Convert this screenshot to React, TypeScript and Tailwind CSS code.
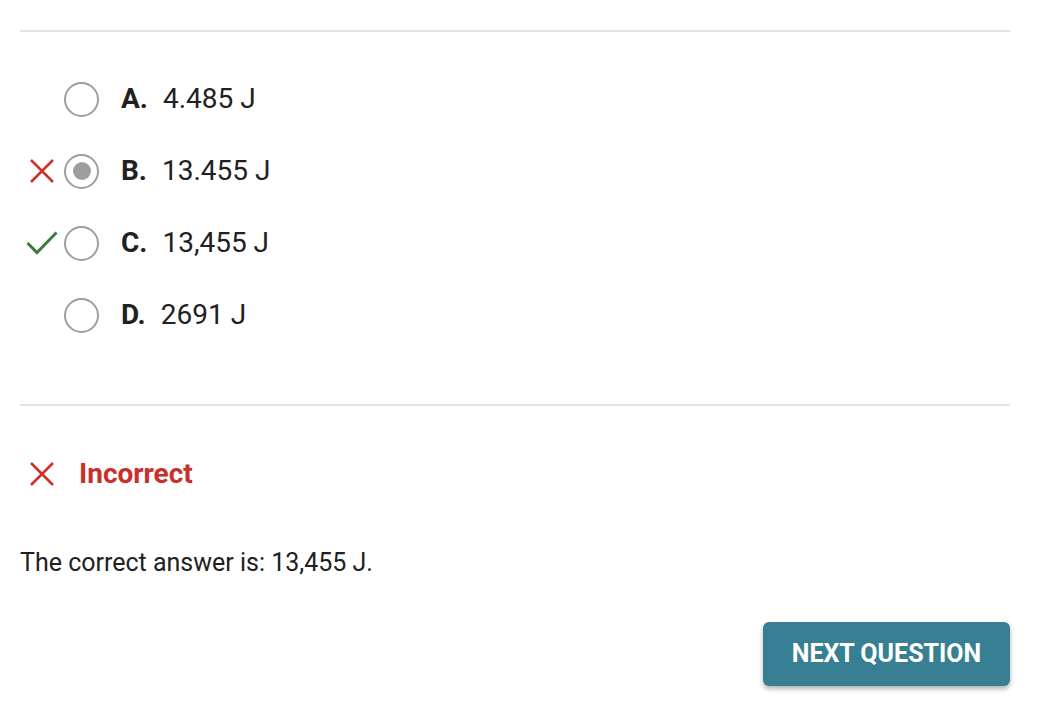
import React from 'react';

type Mark = 'wrong' | 'right' | null;

interface Option {
  letter: string;
  value: string;
  selected: boolean;
  mark: Mark;
}

const options: Option[] = [
  { letter: 'A.', value: '4.485 J', selected: false, mark: null },
  { letter: 'B.', value: '13.455 J', selected: true, mark: 'wrong' },
  { letter: 'C.', value: '13,455 J', selected: false, mark: 'right' },
  { letter: 'D.', value: '2691 J', selected: false, mark: null },
];

const CrossIcon = () => (
  <svg width="26" height="26" viewBox="0 0 26 26" fill="none">
    <path d="M2 2 L24 24 M24 2 L2 24" stroke="#d0312d" strokeWidth="2.6" />
  </svg>
);

const CheckIcon = () => (
  <svg width="32" height="24" viewBox="0 0 32 24" fill="none">
    <path d="M1.5 12 L11 21.5 L30.5 1.5" stroke="#3a7d3a" strokeWidth="3" />
  </svg>
);

const Radio = ({ selected }: { selected: boolean }) => (
  <div className="flex h-[35px] w-[35px] items-center justify-center rounded-full border-2 border-[#9e9e9e]">
    {selected && <div className="h-[18px] w-[18px] rounded-full bg-[#9e9e9e]" />}
  </div>
);

export default function App() {
  return (
    <div className="min-h-[716px] w-full bg-white font-['Roboto',sans-serif] text-[#212121]">
      <div className="ml-5 w-[990px] pt-[30px]">
        <div className="h-[2px] bg-[#e3e3e3]" />

        <div className="mt-[31px] flex flex-col">
          {options.map((o) => (
            <div key={o.letter} className="flex h-[72px] items-center">
              <div className="flex w-[44px] items-center justify-center">
                {o.mark === 'wrong' && <CrossIcon />}
                {o.mark === 'right' && <CheckIcon />}
              </div>
              <Radio selected={o.selected} />
              <div className="ml-[22px] flex items-center gap-[15px] text-[28px] leading-[36px]">
                <span className="font-bold">{o.letter}</span>
                <span>{o.value}</span>
              </div>
            </div>
          ))}
        </div>

        <div className="mt-[53px] h-[2px] bg-[#e3e3e3]" />

        <div className="mt-[50px] flex h-[36px] items-center">
          <div className="flex w-[44px] items-center justify-center">
            <CrossIcon />
          </div>
          <span className="ml-[15px] text-[28px] font-bold text-[#c9302c]">Incorrect</span>
        </div>

        <p className="mt-[55px] text-[25px] leading-[32px]">The correct answer is: 13,455 J.</p>

        <div className="mt-[43px] flex justify-end">
          <button className="h-[64px] w-[247px] rounded-[6px] bg-[#387f94] text-[25px] font-bold text-white shadow-[0_3px_5px_rgba(0,0,0,0.3)]">
            NEXT QUESTION
          </button>
        </div>
      </div>
    </div>
  );
}
